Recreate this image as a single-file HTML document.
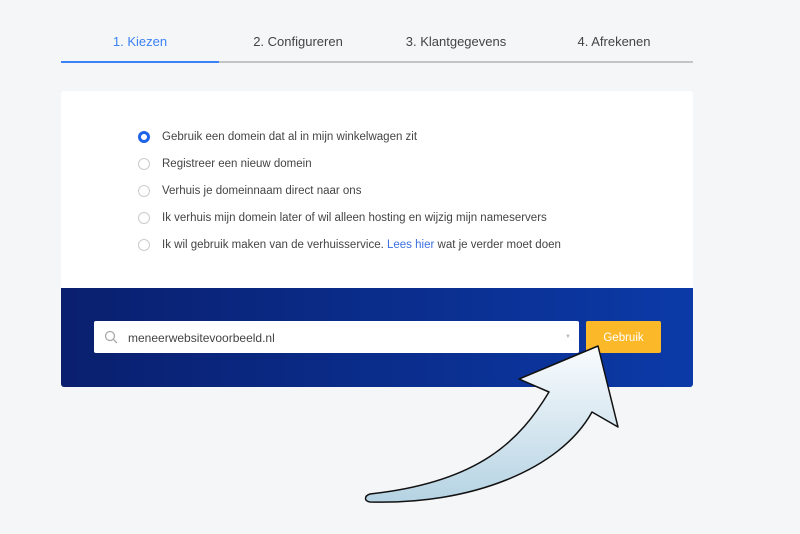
<!DOCTYPE html>
<html><head><style>
body{margin:0;width:800px;height:534px;background:#f5f6f8;font-family:"Liberation Sans",sans-serif;position:relative;overflow:hidden}
.tab{position:absolute;top:34px;font-size:13px;color:#444;text-align:center;width:158px}
.card{position:absolute;left:61px;top:91px;width:632px;height:296px;background:#fff;border-radius:3px;overflow:hidden}
.opt{position:absolute;left:77px;font-size:11.5px;color:#444;display:flex;align-items:center}
.r{width:12px;height:12px;border:1px solid #ccc;border-radius:50%;margin-right:12px;box-sizing:border-box}
.sel{border:3.5px solid #1e63e9}
.band{position:absolute;left:0;top:197px;width:632px;height:99px;background:linear-gradient(90deg,#0a1f6e,#0b3aa8)}
</style></head><body>
<div class="tab" style="left:61px;color:#3b82f6">1. Kiezen</div>
<div class="tab" style="left:219px">2. Configureren</div>
<div class="tab" style="left:377px">3. Klantgegevens</div>
<div class="tab" style="left:535px">4. Afrekenen</div>
<div style="position:absolute;left:61px;top:61px;width:632px;height:2px;background:#c4c4c4"></div>
<div style="position:absolute;left:61px;top:61px;width:158px;height:2px;background:#3b82f6"></div>
<div class="card">
<div class="opt" style="top:40px"><span class="r sel"></span>Gebruik een domein dat al in mijn winkelwagen zit</div>
<div class="opt" style="top:67px"><span class="r"></span>Registreer een nieuw domein</div>
<div class="opt" style="top:94px"><span class="r"></span>Verhuis je domeinnaam direct naar ons</div>
<div class="opt" style="top:121px"><span class="r"></span>Ik verhuis mijn domein later of wil alleen hosting en wijzig mijn nameservers</div>
<div class="opt" style="top:148px"><span class="r"></span>Ik wil gebruik maken van de verhuisservice.&nbsp;<span style="color:#3b6fe0">Lees hier</span>&nbsp;wat je verder moet doen</div>
<div class="band">
<div style="position:absolute;left:33px;top:33px;width:485px;height:32px;background:#fff;border-radius:2px">
<svg style="position:absolute;left:10px;top:9px" width="14" height="14"><circle cx="6" cy="6" r="4.5" fill="none" stroke="#aaa" stroke-width="1.3"/><line x1="9.3" y1="9.3" x2="13" y2="13" stroke="#aaa" stroke-width="1.3"/></svg>
<span style="position:absolute;left:34px;top:10px;font-size:12px;color:#444">meneerwebsitevoorbeeld.nl</span>
<span style="position:absolute;right:8px;top:13px;font-size:6px;color:#bbb">▼</span></div>
<div style="position:absolute;left:525px;top:33px;width:75px;height:32px;background:#fbb829;border-radius:2px;color:#fff;font-size:11.5px;text-align:center;line-height:34px">Gebruik</div>
</div></div>
<svg style="position:absolute;left:0;top:0" width="800" height="534">
<defs><linearGradient id="g" x1="0" y1="0" x2="0" y2="1"><stop offset="0" stop-color="#fafcfe"/><stop offset="1" stop-color="#b5d3e3"/></linearGradient></defs>
<path d="M598,346 L519,379 L549,392 C520,440 480,482 370,494 C364,496 364,501 370,502 C470,505 560,470 592,412 L618,427 Z" fill="url(#g)" stroke="#111" stroke-width="1.5" stroke-linejoin="round"/>
</svg>
</body></html>
